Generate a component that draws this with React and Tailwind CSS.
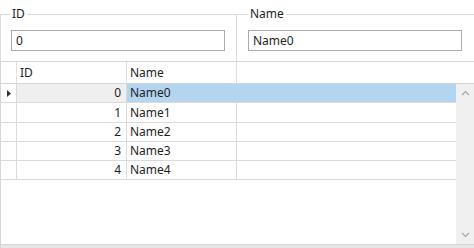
import React from 'react';

const rows = [0, 1, 2, 3, 4].map(i => ({ id: i, name: `Name${i}` }));
// row heights as drawn by the grid (19.3px average)
const heights = ['h-[19px]', 'h-[20px]', 'h-[19px]', 'h-[19px]', 'h-[19px]'];

const App = () => {
    return (
        <div className="w-[474px] h-[248px] bg-white overflow-hidden flex flex-col text-[12px] text-[#1e1e1e]" style={{ fontFamily: '"Noto Sans", "Open Sans", sans-serif' }}>
            {/* group boxes */}
            <div className="flex h-[61px]">
                <div className="w-[237px] pt-[14px] flex flex-col">
                    <div className="relative flex-1 border-t border-l border-r border-[#dcdcdc] pl-[10px] pt-[15px]">
                        <span className="absolute -top-[9px] left-[9px] bg-white px-[2px] leading-[16px]">ID</span>
                        <div className="w-[214px] h-[21px] border border-[#ababab] pl-[4px] flex items-center leading-none">0</div>
                    </div>
                </div>
                <div className="flex-1 pt-[14px] flex flex-col">
                    <div className="relative flex-1 border-t border-[#dcdcdc] pl-[11px] pt-[15px]">
                        <span className="absolute -top-[9px] left-[11px] bg-white px-[2px] leading-[16px]">Name</span>
                        <div className="w-[214px] h-[21px] border border-[#ababab] pl-[4px] flex items-center leading-none">Name0</div>
                    </div>
                </div>
            </div>

            {/* grid */}
            <div className="flex-1 flex flex-col border-t border-l border-[#d6d6d6] bg-white">
                <div className="flex h-[22px] border-b border-[#d6d6d6]">
                    <div className="w-[16px] border-r border-[#e0e0e0]"></div>
                    <div className="w-[110px] border-r border-[#e0e0e0] pl-[3px] flex items-center">ID</div>
                    <div className="w-[110px] border-r border-[#e0e0e0] pl-[3px] flex items-center">Name</div>
                    <div className="flex-1"></div>
                </div>
                <div className="flex-1 flex">
                    <div className="flex-1 flex flex-col">
                        {rows.map((r, i) => {
                            const sel = i === 0;
                            return (
                                <div key={r.id} className={`flex ${heights[i]} border-b border-[#dadada]`}>
                                    <div className="w-[16px] border-r border-[#dadada] flex items-center pl-[6px]">
                                        {sel && (
                                            <svg width="4" height="7" viewBox="0 0 4 7"><path d="M0 0 L4 3.5 L0 7 Z" fill="#333" /></svg>
                                        )}
                                    </div>
                                    <div className={`w-[110px] border-r border-[#dadada] pr-[5px] flex items-center justify-end ${sel ? 'bg-[#efefef]' : ''}`}>{r.id}</div>
                                    <div className={`w-[110px] pl-[3px] flex items-center ${sel ? 'bg-[#b3d5f0]' : 'border-r border-[#dadada]'}`}>{r.name}</div>
                                    <div className={`flex-1 ${sel ? 'bg-[#b3d5f0]' : ''}`}></div>
                                </div>
                            );
                        })}
                    </div>
                    <div className="w-[18px] bg-[#f0f0f0] flex flex-col justify-between items-center py-[6px]">
                        <svg width="9" height="6" viewBox="0 0 9 6"><path d="M1 5 L4.5 1.5 L8 5" fill="none" stroke="#a6a6a6" strokeWidth="1.2" /></svg>
                        <svg width="9" height="6" viewBox="0 0 9 6"><path d="M1 1 L4.5 4.5 L8 1" fill="none" stroke="#a6a6a6" strokeWidth="1.2" /></svg>
                    </div>
                </div>
                <div className="h-[4px] bg-[#e6e6e6] border-t border-[#d6d6d6]"></div>
            </div>
        </div>
    );
};

export default App;
